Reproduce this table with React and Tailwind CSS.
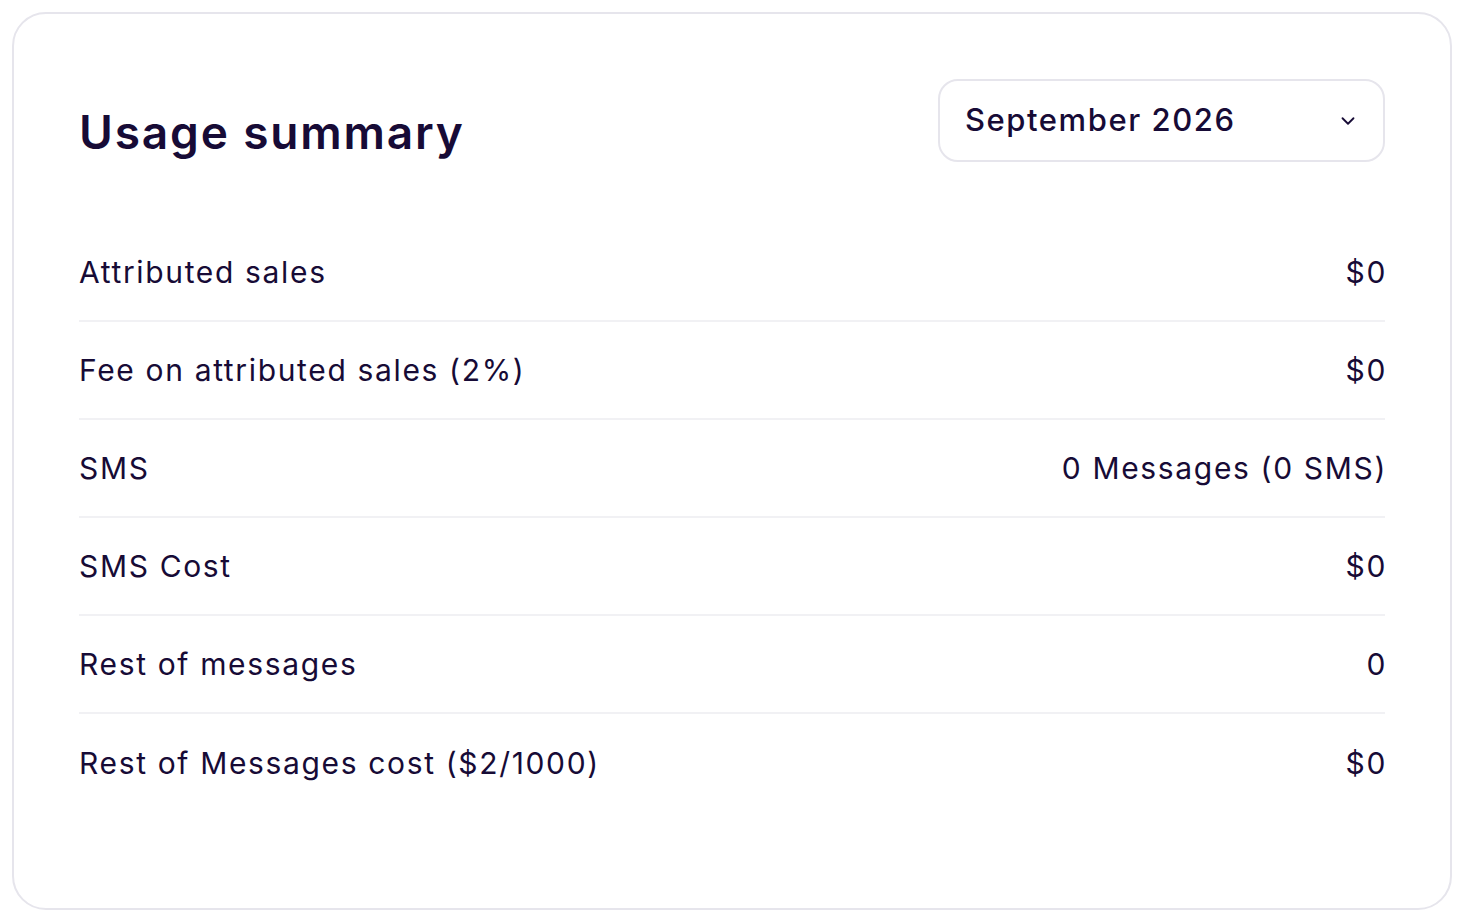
import React from 'react';

const rows = [
  { label: 'Attributed sales', value: '$0' },
  { label: 'Fee on attributed sales (2%)', value: '$0' },
  { label: 'SMS', value: '0 Messages (0 SMS)' },
  { label: 'SMS Cost', value: '$0' },
  { label: 'Rest of messages', value: '0' },
  { label: 'Rest of Messages cost ($2/1000)', value: '$0' },
];

const App = () => {
  return (
    <div className="min-h-screen bg-white p-3 font-['Inter',sans-serif] text-[#170b36]">
      <div className="rounded-[34px] border-2 border-[#e6e5ec] px-[65px] pt-[65px] pb-[96px]">
        <div className="flex items-start justify-between">
          <h1 className="mt-[30px] text-[46px] font-semibold leading-none tracking-[0.04em]">Usage summary</h1>
          <button className="flex h-[83px] w-[447px] items-center justify-between rounded-[20px] border-2 border-[#e6e5ec] pl-[25px] pr-[24px]">
            <span className="text-[31px] font-medium tracking-[0.05em]">September 2026</span>
            <svg width="22" height="22" viewBox="0 0 24 24" fill="none" stroke="#170b36" strokeWidth="2" strokeLinecap="round" strokeLinejoin="round">
              <path d="M6 9l6 6 6-6" />
            </svg>
          </button>
        </div>

        <div className="mt-[62px]">
          {rows.map((row, i) => (
            <div
              key={i}
              className={`flex h-[98px] items-center justify-between text-[30px] tracking-[0.055em] ${i < rows.length - 1 ? 'border-b-2 border-[#f1f1f4]' : ''}`}
            >
              <span>{row.label}</span>
              <span className="-mr-[2px]">{row.value}</span>
            </div>
          ))}
        </div>
      </div>
    </div>
  );
};

export default App;
